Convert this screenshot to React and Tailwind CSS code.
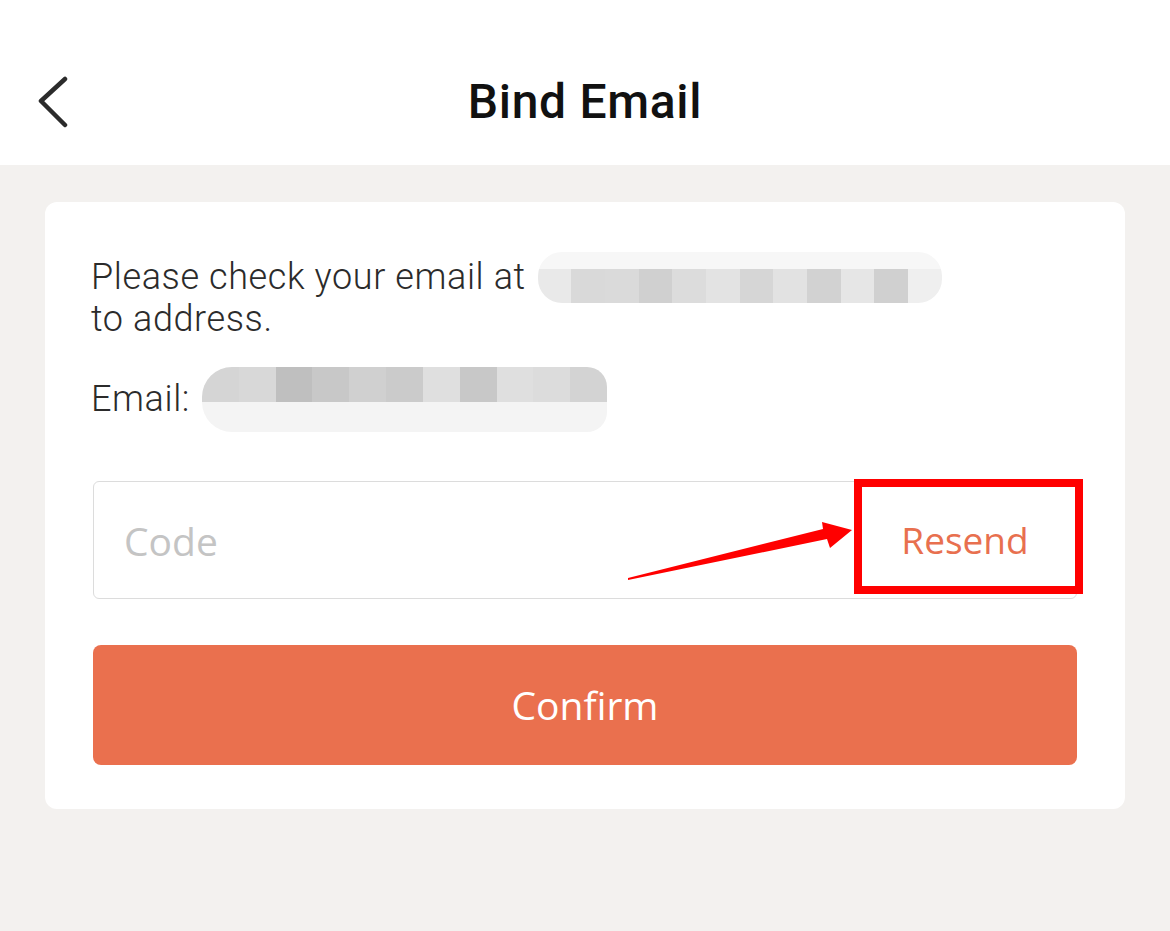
import React from 'react'

const topCells = ['#e9e9e9', '#d9d9d9', '#dadada', '#d0d0d0', '#dcdcdc', '#e3e3e3', '#d6d6d6', '#e2e2e2', '#d2d2d2', '#e6e6e6', '#d0d0d0', '#efefef']
const emailCells = ['#d5d5d5', '#d8d8d8', '#bfbfbf', '#c8c8c8', '#d0d0d0', '#cbcbcb', '#dfdfdf', '#c8c8c8', '#dfdfdf', '#dcdcdc', '#d3d3d3']

const BlurTop = () => (
  <div className="ml-[12px] flex h-[51px] w-[404px] flex-col overflow-hidden rounded-[24px]">
    <div className="h-[17px] bg-[#f7f7f7]" />
    <div className="flex h-[34px]">
      {topCells.map((c, i) => (
        <div key={i} className="h-full flex-1" style={{ background: c }} />
      ))}
    </div>
  </div>
)

const BlurEmail = () => (
  <div className="ml-[12px] flex h-[65px] w-[405px] flex-col overflow-hidden rounded-l-[30px] rounded-r-[20px]">
    <div className="flex h-[35px]">
      {emailCells.map((c, i) => (
        <div key={i} className="h-full flex-1" style={{ background: c }} />
      ))}
    </div>
    <div className="h-[30px] bg-[#f4f4f4]" />
  </div>
)

const App = () => {
  return (
    <div className="min-h-[931px] bg-[#f3f1ef] font-['Roboto',sans-serif] text-[#2b2b2b]">
      <header className="flex h-[165px] items-center bg-white pt-[38px]">
        <div className="flex w-[120px] pl-[36px]">
          <svg width="34" height="52" viewBox="0 0 34 52" fill="none">
            <path d="M29 3 L5 25 L29 49" stroke="#2b2b2b" strokeWidth="4.5" strokeLinecap="round" strokeLinejoin="round" />
          </svg>
        </div>
        <h1 className="flex-1 text-center text-[48px] font-medium leading-none tracking-[0.7px] text-[#111]">Bind Email</h1>
        <div className="w-[120px]" />
      </header>

      <main className="px-[45px] pt-[37px]">
        <div className="rounded-[12px] bg-white px-[48px] pb-[44px] pt-[54px]">
          <div className="-ml-[2px] text-[36px] font-light leading-[42px] tracking-[0.6px]">
            <div className="flex h-[42px] items-center">
              <span>Please check your email at</span>
              <BlurTop />
            </div>
            <div className="h-[42px]">to address.</div>
            <div className="mt-[38px] flex h-[42px] items-center">
              <span>Email:</span>
              <BlurEmail />
            </div>
          </div>

          <div className="relative mt-[61px] flex h-[118px] items-center rounded-[6px] border-[1.5px] border-[#dcdcdc] font-['Open_Sans',sans-serif]">
            <input
              placeholder="Code"
              className="h-full flex-1 bg-transparent pl-[30px] text-[39px] outline-none placeholder:text-[#c4c4c4]"
            />
            <button className="w-[222px] text-center text-[37px] text-[#e8704f]">Resend</button>
            <div className="pointer-events-none absolute right-[-7px] top-[-3px] h-[115px] w-[229px] border-[8px] border-[#ff0000]" />
            <svg className="pointer-events-none absolute left-[534px] top-[39px]" width="226" height="60" viewBox="0 0 226 60">
              <polygon points="0,57 195,8 194,1 224,9 202,27 199,18 0,59" fill="#ff0000" />
            </svg>
          </div>

          <button className="mt-[46px] flex h-[120px] w-full items-center justify-center rounded-[8px] bg-[#ea704e] font-['Open_Sans',sans-serif] text-[39px] text-white">
            Confirm
          </button>
        </div>
      </main>
    </div>
  )
}

export default App
